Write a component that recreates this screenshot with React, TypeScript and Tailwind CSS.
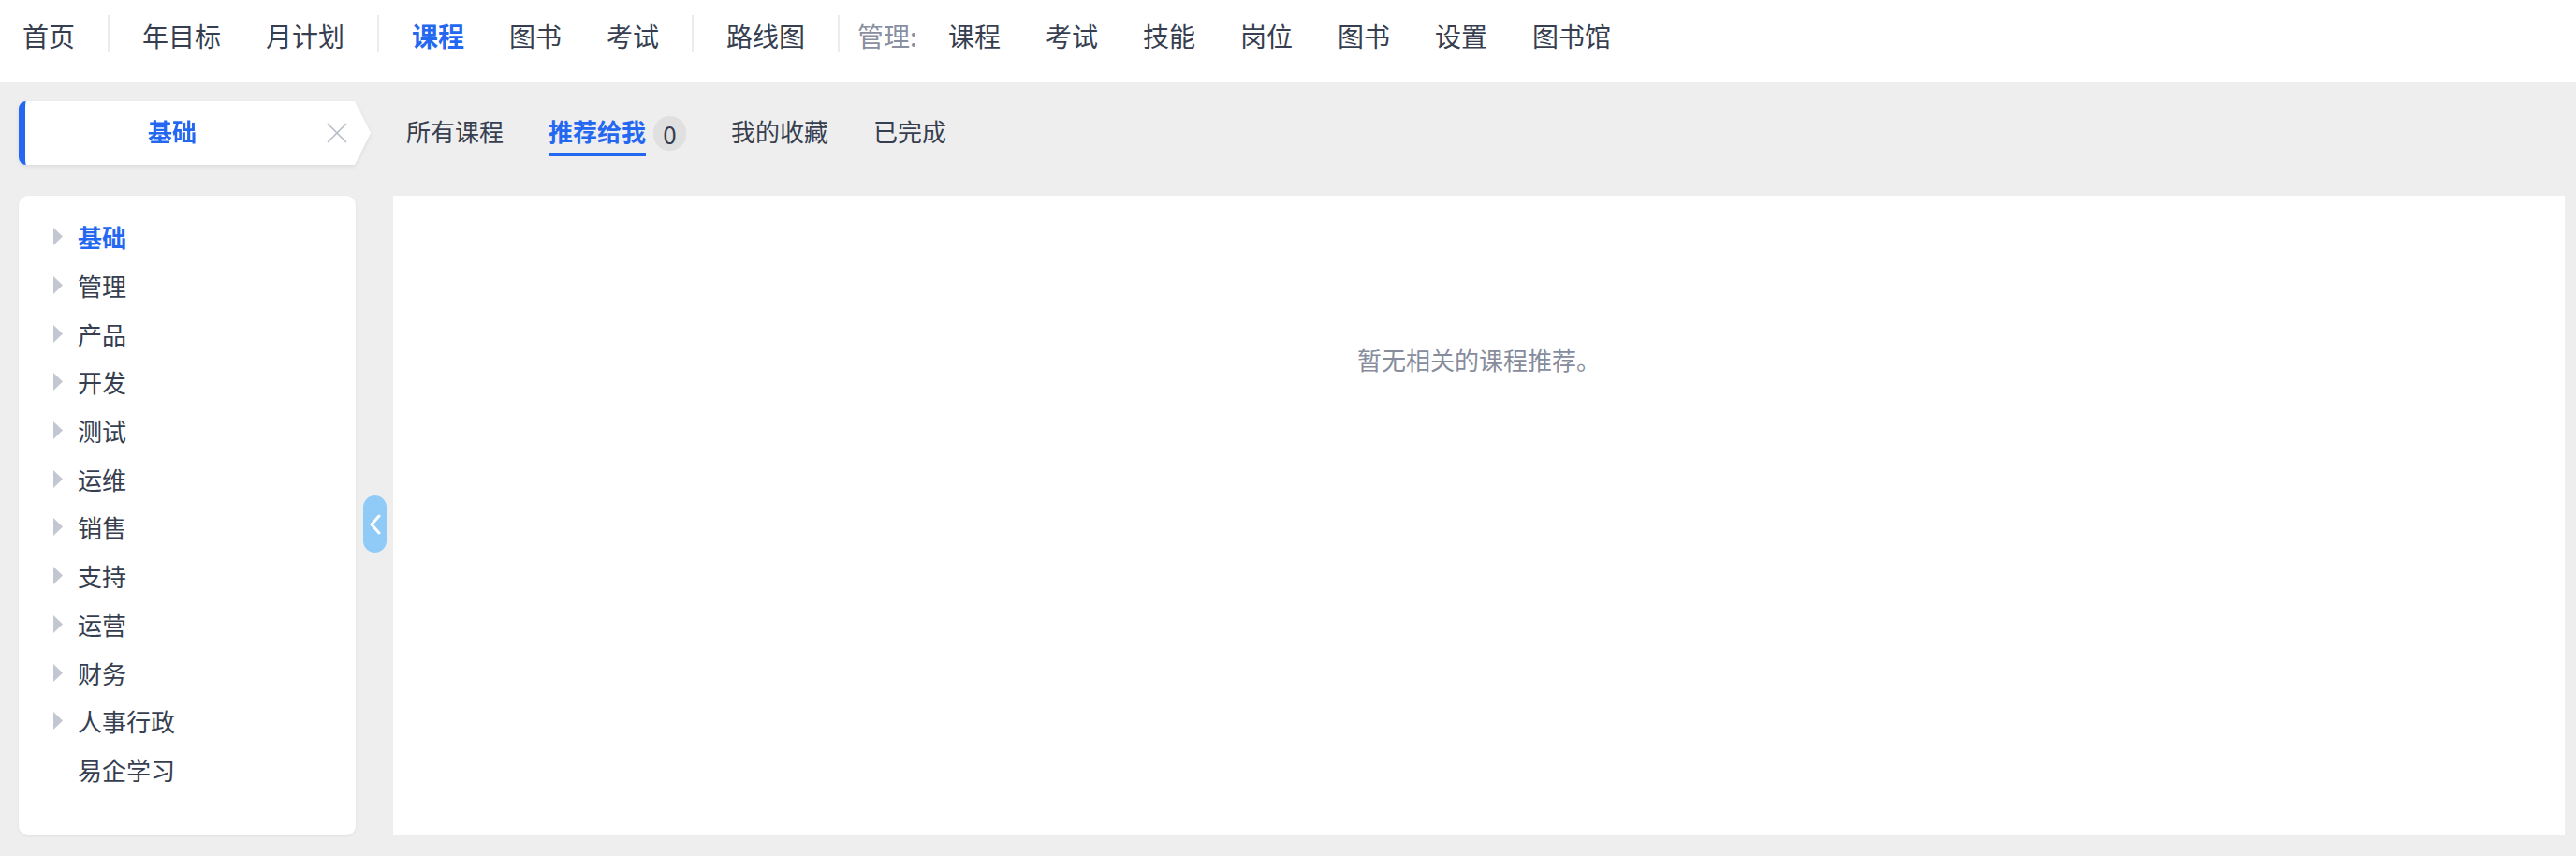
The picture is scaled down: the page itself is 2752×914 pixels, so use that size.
import { X } from "lucide-react";

const topLinks = [
  { group: 0, items: ["首页"] },
  { group: 1, items: ["年目标", "月计划"] },
  { group: 2, items: ["课程", "图书", "考试"] },
  { group: 3, items: ["路线图"] },
];

const adminLinks = ["课程", "考试", "技能", "岗位", "图书", "设置", "图书馆"];

const categories = [
  "基础",
  "管理",
  "产品",
  "开发",
  "测试",
  "运维",
  "销售",
  "支持",
  "运营",
  "财务",
  "人事行政",
];

const Divider = () => <div className="mx-[11px] h-[40px] w-[2px] bg-[#ececec]" />;

const Caret = () => (
  <svg width="10" height="19" viewBox="0 0 10 19" className="shrink-0">
    <polygon points="0,0 10,9.5 0,19" fill="#c3c7d2" />
  </svg>
);

const TopNav = () => (
  <nav className="flex h-[88px] items-start bg-white pt-[16px] text-[28px] text-[#363e4f]">
    {topLinks.map((g, gi) => (
      <div key={g.group} className="flex items-start">
        {gi > 0 && <Divider />}
        {g.items.map((label) => (
          <a
            key={label}
            className={
              label === "课程"
                ? "flex h-[44px] items-center px-[24px] font-bold text-[#2468f2]"
                : "flex h-[44px] items-center px-[24px]"
            }
          >
            {label}
          </a>
        ))}
      </div>
    ))}
    <Divider />
    <span className="ml-[8px] flex h-[44px] items-center pr-[9px] text-[#8a8fa0]">管理:</span>
    {adminLinks.map((label) => (
      <a key={label} className="flex h-[44px] items-center px-[24px]">
        {label}
      </a>
    ))}
  </nav>
);

const Tab = ({ label, active }: { label: string; active?: boolean }) => (
  <div className="flex flex-col pt-[5px]">
    <span
      className={
        active
          ? "leading-[36px] font-bold text-[#2468f2]"
          : "leading-[36px] text-[#363e4f]"
      }
    >
      {label}
    </span>
    <div className={active ? "mt-[5px] h-[4px] bg-[#2468f2]" : "mt-[5px] h-[4px]"} />
  </div>
);

const TabBar = () => (
  <div className="mt-[20px] flex h-[68px] items-center pl-[20px] text-[26px]">
    <div className="drop-shadow-[0_2px_2px_rgba(0,0,0,0.07)]">
      <div className="flex h-[68px] w-[376px] items-center rounded-l-[8px] border-l-[7px] border-[#2468f2] bg-white [clip-path:polygon(0_0,359px_0,376px_50%,359px_100%,0_100%)]">
        <span className="mb-[5px] w-[314px] text-center leading-[36px] font-bold text-[#2468f2]">基础</span>
        <X className="h-[38px] w-[38px] text-[#b9bdc8]" strokeWidth={1.1} />
      </div>
    </div>
    <div className="ml-[38px] flex items-center gap-[48px]">
      <Tab label="所有课程" />
      <div className="flex items-center">
        <Tab label="推荐给我" active />
        <span className="ml-[8px] flex h-[37px] w-[35px] items-center justify-center rounded-full bg-[#e0e0e0] text-[26px] text-[#363e4f]">
          0
        </span>
      </div>
      <Tab label="我的收藏" />
      <Tab label="已完成" />
    </div>
  </div>
);

const Sidebar = () => (
  <aside className="relative h-full w-[360px] shrink-0 rounded-[10px] bg-white pt-[18px] pl-[37px] shadow-[0_1px_3px_rgba(0,0,0,0.06)]">
    {categories.map((c, i) => (
      <div key={c} className="flex h-[51.7px] items-center gap-[16px] text-[26px]">
        <Caret />
        <span className={i === 0 ? "font-bold text-[#2468f2]" : "text-[#363e4f]"}>{c}</span>
      </div>
    ))}
    <div className="flex h-[51.7px] items-center gap-[16px] text-[26px] text-[#363e4f]">
      <span className="w-[10px]" />
      <span>易企学习</span>
    </div>
    <button className="absolute top-[320px] left-[368px] flex h-[61px] w-[25px] items-center justify-center rounded-full bg-[#8fcbf6]">
      <svg width="12" height="22" viewBox="0 0 12 22">
        <polyline points="10,2 2,11 10,20" fill="none" stroke="#ffffff" strokeWidth="3" strokeLinecap="round" strokeLinejoin="round" />
      </svg>
    </button>
  </aside>
);

export default function App() {
  return (
    <div className="flex h-[914px] w-full flex-col bg-[#eeeeee] font-['Noto_Sans_CJK_SC',sans-serif]">
      <TopNav />
      <TabBar />
      <main className="mt-[33px] flex h-[683px] gap-[40px] pr-[12px] pl-[20px]">
        <Sidebar />
        <section className="flex-1 bg-white pt-[157px] text-center text-[26px] leading-[36px] text-[#868c9c]">
          暂无相关的课程推荐。
        </section>
      </main>
    </div>
  );
}
